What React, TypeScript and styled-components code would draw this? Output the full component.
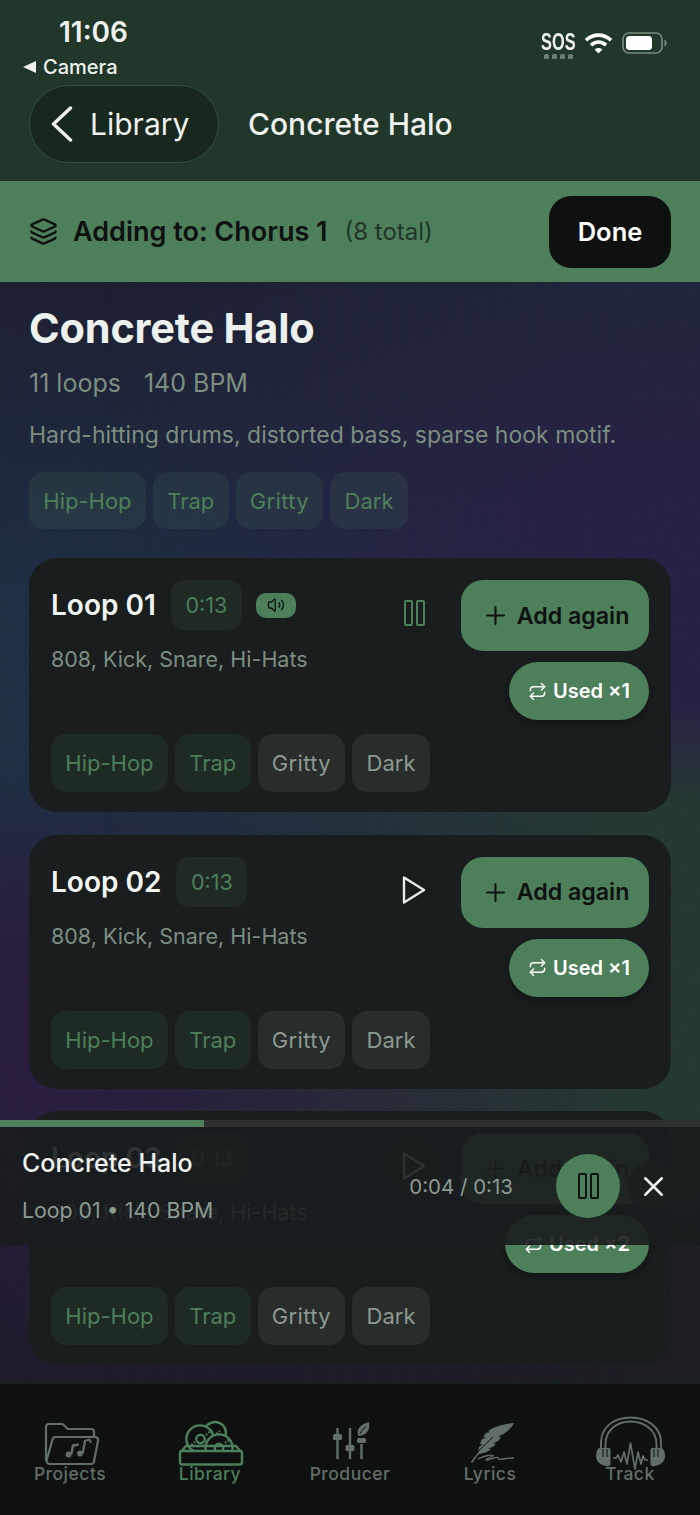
import React from "react";
import styled, { createGlobalStyle } from "styled-components";
import { Layers, Plus, Repeat, Volume2, X } from "lucide-react";

const GlobalStyle = createGlobalStyle`
  html, body {
    margin: 0;
    padding: 0;
    background: #0e1110;
  }
  * {
    box-sizing: border-box;
  }
`;

const GREEN = "#4d7f5a";
const INK = "#0e1110";
const MUTED = "#7c8e82";

const Page = styled.div`
  width: 700px;
  height: 1515px;
  display: flex;
  flex-direction: column;
  overflow: hidden;
  font-family: Inter, "Noto Sans", sans-serif;
  background: ${INK};
`;

const Header = styled.header`
  background: #21372a;
  height: 181px;
  flex-shrink: 0;
  color: #eef1ee;
`;

const StatusBar = styled.div`
  height: 85px;
  padding: 15px 33px 0 23px;
  display: flex;
  justify-content: space-between;
`;

const StatusLeft = styled.div`
  display: flex;
  flex-direction: column;
`;

const Time = styled.div`
  margin-left: 36px;
  font-size: 28px;
  line-height: 34px;
  font-weight: 600;
`;

const BackToApp = styled.div`
  margin-top: 6px;
  display: flex;
  align-items: center;
  gap: 7px;
  font-size: 20px;
  line-height: 24px;
  font-weight: 500;
`;

const BackArrow = styled.span`
  width: 0;
  height: 0;
  border-style: solid;
  border-width: 6.5px 13px 6.5px 0;
  border-color: transparent #eef1ee transparent transparent;
`;

const StatusRight = styled.div`
  display: flex;
  align-items: flex-start;
  gap: 9px;
  padding-top: 17px;
`;

const SosBox = styled.div`
  width: 33px;
  display: flex;
  flex-direction: column;
  align-items: center;
  margin-top: -1px;
`;

const SosText = styled.div`
  font-family: "Liberation Sans", sans-serif;
  font-size: 24px;
  line-height: 22px;
  font-weight: 700;
  transform: scaleX(0.68);
`;

const SosDots = styled.div`
  display: flex;
  gap: 3px;
  margin-top: 1px;
`;

const SosDot = styled.span`
  width: 5px;
  height: 5px;
  border-radius: 1.5px;
  background: #6f7f75;
`;

const NavRow = styled.div`
  display: flex;
  align-items: center;
  padding-left: 29px;
  gap: 29px;
`;

const BackButton = styled.div`
  width: 190px;
  height: 78px;
  border-radius: 39px;
  background: #19281f;
  border: 1.5px solid #2f5239;
  display: flex;
  align-items: center;
  padding-left: 21px;
  gap: 17px;
  font-size: 30px;
  font-weight: 400;
`;

const NavTitle = styled.div`
  font-size: 30px;
  font-weight: 500;
`;

const Banner = styled.div`
  height: 101px;
  flex-shrink: 0;
  background: ${GREEN};
  display: flex;
  align-items: center;
  padding: 0 29px;
  color: ${INK};
`;

const BannerLabel = styled.div`
  margin-left: 15px;
  font-size: 27px;
  font-weight: 600;
`;

const BannerCount = styled.div`
  margin-left: 17px;
  font-size: 24px;
  color: #22352a;
`;

const DoneButton = styled.div`
  margin-left: auto;
  width: 122px;
  height: 72px;
  border-radius: 22px;
  background: ${INK};
  color: #fff;
  display: flex;
  align-items: center;
  justify-content: center;
  font-size: 25.5px;
  font-weight: 600;
`;

const Stage = styled.div`
  position: relative;
  flex: 1;
  min-height: 0;
  overflow: hidden;
`;

const Scroll = styled.main`
  position: relative;
  height: 100%;
  padding: 22px 29px 0;
  background: linear-gradient(
    to bottom,
    #191b2d 0%,
    #1a2a40 28%,
    #1a2a40 45%,
    #25193a 60%,
    #25183a 75%,
    #1b1727 100%
  );

  &::before {
    content: "";
    position: absolute;
    inset: 0;
    background: linear-gradient(
      to bottom,
      #1c2238 0%,
      #241c42 20%,
      #241c42 38%,
      #21352f 47%,
      #21352f 76%,
      #1a1a20 88%,
      #191920 100%
    );
    mask-image: linear-gradient(to right, transparent 15%, black 90%);
  }
`;

const Grain = styled.svg`
  position: absolute;
  inset: 0;
  width: 100%;
  height: 100%;
  opacity: 0.06;
  pointer-events: none;
`;

const Content = styled.div`
  position: relative;
`;

const HeroTitle = styled.h1`
  margin: 0;
  font-size: 41.5px;
  line-height: 48px;
  font-weight: 700;
  color: #edf1ee;
  letter-spacing: -0.2px;
`;

const HeroMeta = styled.div`
  margin-top: 16px;
  display: flex;
  gap: 23px;
  font-size: 25px;
  line-height: 30px;
  color: ${MUTED};
`;

const HeroText = styled.p`
  margin: 22px 0 0;
  font-size: 23px;
  line-height: 30px;
  color: ${MUTED};
`;

const TagRow = styled.div<{ $top: number }>`
  margin-top: ${(p) => p.$top}px;
  display: flex;
  gap: 7px;
`;

const Tag = styled.span<{ $muted?: boolean; $glass?: boolean; $tracked?: boolean }>`
  height: ${(p) => (p.$glass ? "57px" : "58px")};
  padding: 0 14.3px;
  border-radius: 15px;
  display: flex;
  align-items: center;
  font-size: 22px;
  letter-spacing: ${(p) => (p.$tracked ? "0.35px" : "0")};
  background: ${(p) => (p.$glass ? "rgba(77, 127, 90, 0.16)" : p.$muted ? "#282c2b" : "#1e2a24")};
  color: ${(p) => (p.$muted ? "#8b9990" : GREEN)};
`;

const CardList = styled.div`
  margin-top: 29px;
  display: flex;
  flex-direction: column;
  gap: 22.5px;
`;

const Card = styled.article`
  height: 254px;
  padding: 22px 22px 20px;
  border-radius: 28px;
  background: #191d1e;
  display: flex;
  flex-direction: column;
  justify-content: space-between;
`;

const CardTop = styled.div`
  display: flex;
  align-items: flex-start;
`;

const CardInfo = styled.div`
  flex: 1;
  min-width: 0;
`;

const TitleRow = styled.div`
  height: 50px;
  display: flex;
  align-items: center;
`;

const LoopName = styled.div`
  font-size: 28px;
  font-weight: 600;
  color: #f0f3f0;
`;

const DurationChip = styled.div`
  margin-left: 15px;
  width: 71px;
  height: 50px;
  border-radius: 13px;
  background: #1f2a24;
  color: ${GREEN};
  display: flex;
  align-items: center;
  justify-content: center;
  font-size: 21.5px;
`;

const PlayingBadge = styled.div`
  margin-left: 14px;
  width: 40px;
  height: 25px;
  border-radius: 10px;
  background: ${GREEN};
  display: flex;
  align-items: center;
  justify-content: center;
  color: ${INK};
`;

const Instruments = styled.div`
  margin-top: 14px;
  font-size: 21.5px;
  line-height: 30px;
  color: ${MUTED};
`;

const PlayButton = styled.div<{ $active?: boolean }>`
  width: 62px;
  height: 62px;
  margin: 2px 16px 0 0;
  border-radius: 50%;
  background: #181c1c;
  display: flex;
  align-items: center;
  justify-content: center;
  color: ${(p) => (p.$active ? GREEN : "#e8ece9")};
`;

const CardActions = styled.div`
  width: 188px;
  display: flex;
  flex-direction: column;
  align-items: flex-end;
  gap: 11px;
`;

const AddButton = styled.div`
  width: 100%;
  height: 71px;
  border-radius: 22px;
  background: ${GREEN};
  color: ${INK};
  display: flex;
  align-items: center;
  justify-content: center;
  gap: 7px;
  font-size: 23.2px;
  font-weight: 600;
`;

const UsedPill = styled.div`
  height: 58px;
  padding: 0 19px;
  border-radius: 29px;
  background: ${GREEN};
  color: #fff;
  display: flex;
  align-items: center;
  gap: 6px;
  font-size: 20px;
  font-weight: 600;
  box-shadow: 0 4px 10px rgba(0, 0, 0, 0.3);
`;

const Player = styled.section`
  position: absolute;
  left: 0;
  right: 0;
  top: 838px;
  height: 125px;
  background: rgba(25, 29, 30, 0.9);
  display: flex;
  flex-direction: column;
`;

const Progress = styled.div`
  height: 7px;
  background: #2e312f;
`;

const ProgressFill = styled.div`
  height: 100%;
  background: ${GREEN};
`;

const PlayerBody = styled.div`
  flex: 1;
  display: flex;
  align-items: center;
  padding: 0 22px;
`;

const PlayerInfo = styled.div`
  flex: 1;
  display: flex;
  flex-direction: column;
  gap: 17px;
`;

const PlayerTitle = styled.div`
  font-size: 25px;
  line-height: 30px;
  font-weight: 500;
  color: #f0f3f0;
`;

const PlayerSub = styled.div`
  font-size: 21.3px;
  line-height: 30px;
  color: #8d9a91;
`;

const PlayerTime = styled.div`
  font-size: 20.5px;
  color: #8d9a91;
  margin-right: 43px;
`;

const PlayerPause = styled.div`
  width: 64px;
  height: 64px;
  border-radius: 50%;
  background: ${GREEN};
  color: ${INK};
  display: flex;
  align-items: center;
  justify-content: center;
`;

const PlayerClose = styled.div`
  margin-left: 8px;
  width: 50px;
  height: 50px;
  border-radius: 50%;
  background: #1a1e1e;
  color: #f0f3f0;
  display: flex;
  align-items: center;
  justify-content: center;
`;

const TabBar = styled.nav`
  height: 133px;
  flex-shrink: 0;
  background: ${INK};
  border-top: 2px solid #182120;
  display: flex;
`;

const TabItem = styled.div<{ $active?: boolean }>`
  width: 140px;
  height: 71px;
  margin-top: 30px;
  position: relative;
  display: flex;
  flex-direction: column;
  align-items: center;
  justify-content: flex-end;
  color: ${(p) => (p.$active ? GREEN : "#626f68")};
`;

const TabGlyph = styled.div<{ $x: number; $y: number }>`
  position: absolute;
  left: ${(p) => p.$x}px;
  top: ${(p) => p.$y}px;
  display: flex;
`;

const TabLabel = styled.div`
  position: relative;
  font-size: 17.5px;
  line-height: 22px;
  letter-spacing: 0.5px;
  font-weight: 500;
`;

const WifiIcon = () => (
  <svg width="29" height="22" viewBox="0 0 29 22" fill="none" stroke="#fff" strokeWidth="3.6">
    <path d="M2 8.2C9 1.4 20 1.4 27 8.2" />
    <path d="M7 13.2C11.4 9 17.6 9 22 13.2" />
    <path d="M14.5 21.5 10.6 17.4C12.8 15.4 16.2 15.4 18.4 17.4Z" fill="#fff" stroke="none" />
  </svg>
);

const BatteryIcon = () => (
  <svg width="45" height="22" viewBox="0 0 45 22" fill="none">
    <rect x="1" y="1" width="39" height="20" rx="6" stroke="#7b8a80" strokeWidth="1.6" />
    <rect x="4" y="4" width="26" height="14" rx="3.5" fill="#fff" />
    <path d="M42.5 7.5c1.6.6 2 2 2 3.5s-.4 2.9-2 3.5z" fill="#7b8a80" />
  </svg>
);

const BackChevron = () => (
  <svg width="22" height="36" viewBox="0 0 22 36" fill="none" stroke="currentColor" strokeWidth="3.4" strokeLinecap="round" strokeLinejoin="round">
    <path d="M19.5 2 2.500 18l17 16" />
  </svg>
);

const PauseGlyph = () => (
  <svg width="21" height="26" viewBox="0 0 21 26" fill="none" stroke="currentColor" strokeWidth="2">
    <rect x="1" y="1" width="7" height="24" rx="1" />
    <rect x="13" y="1" width="7" height="24" rx="1" />
  </svg>
);

const PlayGlyph = () => (
  <svg width="24" height="30" viewBox="0 0 24 30" fill="none" stroke="currentColor" strokeWidth="2.4" strokeLinejoin="round">
    <path d="M2 2.500 22 15 2 27.500Z" />
  </svg>
);

const ProjectsIcon = () => (
  <svg width="56" height="44" viewBox="0 0 56 44" fill="none" stroke="currentColor" strokeWidth="2.2" strokeLinejoin="round">
    <path d="M2 39V5a3 3 0 0 1 3-3h12.500a3 3 0 0 1 2.200 1l4 4H47a3 3 0 0 1 3 3v4.500" />
    <path d="M11.500 15H51a3 3 0 0 1 3 3.600l-4 21a3 3 0 0 1-3 2.400H5.800a3.200 3.200 0 0 1-3.200-3.800L8.500 17.400a3 3 0 0 1 3-2.400Z" />
    <g fill="currentColor" stroke="none">
      <circle cx="24.500" cy="32.500" r="2.900" />
      <path d="M26 32.500 28 22.500l7-1.300-.4 2.600-4.600.9-1.800 8.500Z" />
      <circle cx="36" cy="31.500" r="2.900" />
      <path d="M37.500 31.500 40 18l6-1.500 2 4-1.300.7-1.900-2.500-2.600.6-2.600 12.700Z" />
    </g>
  </svg>
);

const LibraryIcon = () => (
  <svg width="66" height="46" viewBox="0 0 66 46" fill="none" stroke="currentColor" strokeWidth="2.4">
    <circle cx="37" cy="13" r="11" fill={INK} />
    <path d="M36 16l6-5" strokeDasharray="1.600 1.600" />
    <circle cx="22" cy="19" r="13.600" fill={INK} />
    <circle cx="22.500" cy="19" r="4.200" />
    <path d="M11 27l6-5M28 15l6-5" strokeDasharray="1.600 1.600" />
    <circle cx="41" cy="28" r="13.600" fill={INK} />
    <circle cx="41" cy="28" r="4.200" />
    <path d="M47 23l5-4" strokeDasharray="1.600 1.600" />
    <path d="M2 33l6-7h50l6 7" strokeLinejoin="round" />
    <rect x="2" y="31" width="62" height="13.500" rx="2.200" fill={INK} />
  </svg>
);

const ProducerIcon = () => (
  <svg width="40" height="42" viewBox="0 0 40 42" fill="none" stroke="currentColor" strokeWidth="2.400">
    <path d="M5.500 8v31M18 8v31M29.500 24v15" />
    <g fill="currentColor" stroke="none">
      <rect x="1" y="14" width="9" height="6" rx="1.500" />
      <rect x="13.500" y="25" width="9" height="6" rx="1.500" />
      <rect x="25" y="18" width="9" height="5" rx="1.500" />
      <path d="M26.500 16C23.500 9 29 4 37 2c1.500 7-1.500 13-10.500 14Z" />
    </g>
    <path d="M28 14c1.500-3.500 3.500-5.500 6-8" stroke={INK} strokeWidth="1" />
  </svg>
);

const LyricsIcon = () => (
  <svg width="46" height="44" viewBox="0 0 46 44" fill="none">
    <path
      d="M44 3C32 4 24 7 18 11l2 1-4 1-3 4 3 .5-4.500 2L10 24l2.500.5L9 27c-.6 2.500-.4 5 .2 7 5-.6 9-2.500 12-5l-3-.6 5.500-1.800 2-3-3-.4 5.500-2.200 3-4-3.200-.2 5.500-2.800C38.500 11 42 7 44 3Z"
      fill="currentColor"
    />
    <path d="M1.500 42.500C8 33 16 24 27 15" stroke="currentColor" strokeWidth="1.600" />
    <path d="M9 30.500 23 17" stroke={INK} strokeWidth="1" />
    <path
      d="M8 39c5-2.500 13-5 15-3.500 1 1-8 3.500-7 4.500 3 .5 10-3.500 12-2.500 1 .5-.5 1.800 1 1.800 4 0 9-1.300 15-1.300"
      stroke="currentColor"
      strokeWidth="1.300"
    />
  </svg>
);

const TrackIcon = () => (
  <svg width="72" height="56" viewBox="0 0 72 56" fill="none" stroke="currentColor" strokeWidth="1.900">
    <path d="M6 33V28C6 11 20 2.500 35.500 2.500S66 11 66 28v5" />
    <path d="M10.500 33v-4C10.500 15 22 6.500 35.500 6.500S61.500 15 61.500 29v4" />
    <path d="M4 33h10a1.500 1.500 0 0 1 1.500 1.500v14.500c0 1.500-1.500 2.500-3 2.200C6 50.500 1 47 1 41c0-3.500 1-6.500 3-8Z" fill="currentColor" stroke="none" />
    <path d="M67 33H57a1.500 1.500 0 0 0-1.500 1.500v14.500c0 1.500 1.500 2.500 3 2.200C65 50.500 70 47 70 41c0-3.500-1-6.500-3-8Z" fill="currentColor" stroke="none" />
    <path d="M8 34v8M12 34v8M59 34v8M63 34v8" stroke={INK} strokeWidth="1" />
    <path d="M18 43h3l2-3 3 7 3-10 3 12 3.500-21 4.500 26 3-17 3 12 2-8 2 4h3" strokeWidth="1.700" strokeLinejoin="round" />
  </svg>
);

const loops = [
  { name: "Loop 01", used: 1, playing: true },
  { name: "Loop 02", used: 1, playing: false },
  { name: "Loop 03", used: 2, playing: false },
];

const App: React.FC = () => {
  const progress = 29.2;

  return (
    <Page>
      <GlobalStyle />
      <Header>
        <StatusBar>
          <StatusLeft>
            <Time>11:06</Time>
            <BackToApp>
              <BackArrow />
              Camera
            </BackToApp>
          </StatusLeft>
          <StatusRight>
            <SosBox>
              <SosText>SOS</SosText>
              <SosDots>
                <SosDot />
                <SosDot />
                <SosDot />
                <SosDot />
              </SosDots>
            </SosBox>
            <WifiIcon />
            <BatteryIcon />
          </StatusRight>
        </StatusBar>
        <NavRow>
          <BackButton>
            <BackChevron />
            Library
          </BackButton>
          <NavTitle>Concrete Halo</NavTitle>
        </NavRow>
      </Header>

      <Banner>
        <Layers size={29} strokeWidth={1.9} />
        <BannerLabel>Adding to: Chorus 1</BannerLabel>
        <BannerCount>(8 total)</BannerCount>
        <DoneButton>Done</DoneButton>
      </Banner>

      <Stage>
        <Scroll>
          <Grain>
            <filter id="grain">
              <feTurbulence type="fractalNoise" baseFrequency="0.9" numOctaves="2" />
              <feColorMatrix type="saturate" values="0" />
            </filter>
            <rect width="100%" height="100%" filter="url(#grain)" />
          </Grain>
          <Content>
            <HeroTitle>Concrete Halo</HeroTitle>
            <HeroMeta>
              <span>11 loops</span>
              <span>140 BPM</span>
            </HeroMeta>
            <HeroText>Hard-hitting drums, distorted bass, sparse hook motif.</HeroText>
            <TagRow $top={22}>
              <Tag $glass>Hip-Hop</Tag>
              <Tag $glass>Trap</Tag>
              <Tag $glass $tracked>Gritty</Tag>
              <Tag $glass>Dark</Tag>
            </TagRow>
            <CardList>
              {loops.map((loop) => (
                <Card key={loop.name}>
                  <CardTop>
                    <CardInfo>
                      <TitleRow>
                        <LoopName>{loop.name}</LoopName>
                        <DurationChip>0:13</DurationChip>
                        {loop.playing && (
                          <PlayingBadge>
                            <Volume2 size={18} strokeWidth={1.7} />
                          </PlayingBadge>
                        )}
                      </TitleRow>
                      <Instruments>808, Kick, Snare, Hi-Hats</Instruments>
                    </CardInfo>
                    <PlayButton $active={loop.playing}>
                      {loop.playing ? <PauseGlyph /> : <PlayGlyph />}
                    </PlayButton>
                    <CardActions>
                      <AddButton>
                        <Plus size={29} strokeWidth={1.7} />
                        Add again
                      </AddButton>
                      <UsedPill>
                        <Repeat size={19} strokeWidth={1.8} />
                        Used ×{loop.used}
                      </UsedPill>
                    </CardActions>
                  </CardTop>
                  <TagRow $top={0}>
                    <Tag>Hip-Hop</Tag>
                    <Tag>Trap</Tag>
                    <Tag $muted $tracked>Gritty</Tag>
                    <Tag $muted>Dark</Tag>
                  </TagRow>
                </Card>
              ))}
            </CardList>
          </Content>
        </Scroll>

        <Player>
          <Progress>
            <ProgressFill style={{ width: `${progress}%` }} />
          </Progress>
          <PlayerBody>
            <PlayerInfo>
              <PlayerTitle>Concrete Halo</PlayerTitle>
              <PlayerSub>Loop 01 • 140 BPM</PlayerSub>
            </PlayerInfo>
            <PlayerTime>0:04 / 0:13</PlayerTime>
            <PlayerPause>
              <PauseGlyph />
            </PlayerPause>
            <PlayerClose>
              <X size={33} strokeWidth={1.8} />
            </PlayerClose>
          </PlayerBody>
        </Player>
      </Stage>

      <TabBar>
        <TabItem>
          <TabGlyph $x={44} $y={8}><ProjectsIcon /></TabGlyph>
          <TabLabel>Projects</TabLabel>
        </TabItem>
        <TabItem $active>
          <TabGlyph $x={38} $y={6}><LibraryIcon /></TabGlyph>
          <TabLabel>Library</TabLabel>
        </TabItem>
        <TabItem>
          <TabGlyph $x={52} $y={6}><ProducerIcon /></TabGlyph>
          <TabLabel>Producer</TabLabel>
        </TabItem>
        <TabItem>
          <TabGlyph $x={50} $y={6}><LyricsIcon /></TabGlyph>
          <TabLabel>Lyrics</TabLabel>
        </TabItem>
        <TabItem>
          <TabGlyph $x={35} $y={1}><TrackIcon /></TabGlyph>
          <TabLabel>Track</TabLabel>
        </TabItem>
      </TabBar>
    </Page>
  );
};

export default App;
